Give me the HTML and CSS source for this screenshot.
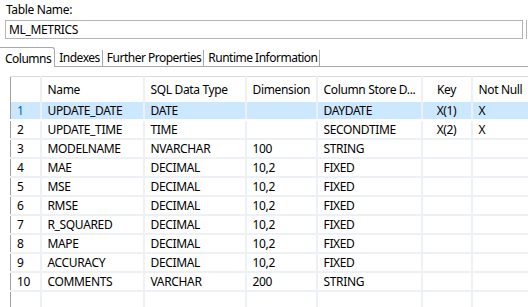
FILE: index.html
```html
<!DOCTYPE html>
<html lang="en">
<head>
    <meta charset="UTF-8">
    <title>Table Editor - ML_METRICS</title>
    <link rel="stylesheet" href="styles.css">
</head>
<body>
    <div class="editor">
        <div class="field-label">Table Name:</div>
        <div class="field-row">
            <div class="field-input">ML_METRICS</div>
            <div class="field-edge"></div>
        </div>
        <div class="tabs">
            <div class="tab active">Columns</div>
            <div class="tab">Indexes</div>
            <div class="tab">Further Properties</div>
            <div class="tab">Runtime Information</div>
            <div class="tab-fill"></div>
        </div>
        <div class="grid-wrap">
            <table class="grid">
                <colgroup>
                    <col class="c-idx">
                    <col class="c-name">
                    <col class="c-type">
                    <col class="c-dim">
                    <col class="c-store">
                    <col class="c-key">
                    <col class="c-null">
                </colgroup>
                <thead>
                    <tr>
                        <th></th>
                        <th>Name</th>
                        <th>SQL Data Type</th>
                        <th>Dimension</th>
                        <th>Column Store D...</th>
                        <th class="center">Key</th>
                        <th>Not Null</th>
                    </tr>
                </thead>
                <tbody>
                    <tr class="selected">
                        <td class="idx">1</td><td>UPDATE_DATE</td><td>DATE</td><td></td><td>DAYDATE</td><td class="center">X(1)</td><td>X</td>
                    </tr>
                    <tr>
                        <td class="idx">2</td><td>UPDATE_TIME</td><td>TIME</td><td></td><td>SECONDTIME</td><td class="center">X(2)</td><td>X</td>
                    </tr>
                    <tr>
                        <td class="idx">3</td><td>MODELNAME</td><td>NVARCHAR</td><td>100</td><td>STRING</td><td></td><td></td>
                    </tr>
                    <tr>
                        <td class="idx">4</td><td>MAE</td><td>DECIMAL</td><td>10,2</td><td>FIXED</td><td></td><td></td>
                    </tr>
                    <tr>
                        <td class="idx">5</td><td>MSE</td><td>DECIMAL</td><td>10,2</td><td>FIXED</td><td></td><td></td>
                    </tr>
                    <tr>
                        <td class="idx">6</td><td>RMSE</td><td>DECIMAL</td><td>10,2</td><td>FIXED</td><td></td><td></td>
                    </tr>
                    <tr>
                        <td class="idx">7</td><td>R_SQUARED</td><td>DECIMAL</td><td>10,2</td><td>FIXED</td><td></td><td></td>
                    </tr>
                    <tr>
                        <td class="idx">8</td><td>MAPE</td><td>DECIMAL</td><td>10,2</td><td>FIXED</td><td></td><td></td>
                    </tr>
                    <tr>
                        <td class="idx">9</td><td>ACCURACY</td><td>DECIMAL</td><td>10,2</td><td>FIXED</td><td></td><td></td>
                    </tr>
                    <tr>
                        <td class="idx">10</td><td>COMMENTS</td><td>VARCHAR</td><td>200</td><td>STRING</td><td></td><td></td>
                    </tr>
                    <tr>
                        <td class="idx"></td><td></td><td></td><td></td><td></td><td></td><td></td>
                    </tr>
                </tbody>
            </table>
        </div>
    </div>
</body>
</html>
```

FILE: styles.css
```css
:root {
    --text-color: #000;
    --border-color: #a9a9a9;
    --grid-line: #edf0f5;
    --select-color: #cce8ff;
    --index-blue: #0063b1;
}
html, body {
    margin: 0;
    background-color: #fff;
    overflow: hidden;
}
body {
    font-family: 'Noto Sans', 'Open Sans', sans-serif;
    font-size: 12px;
    letter-spacing: -0.35px;
    color: var(--text-color);
}
.editor {
    width: 528px;
    height: 307px;
    overflow: hidden;
}
.field-label {
    padding: 2px 0 0 6px;
    height: 18px;
    line-height: 16px;
}
.field-row {
    display: flex;
    gap: 3px;
    padding-left: 5px;
}
.field-input {
    width: 513px;
    height: 17px;
    line-height: 17px;
    border: 1px solid #b4b4b4;
    padding-left: 3px;
}
.field-edge {
    width: 1px;
    height: 19px;
    background-color: #b4b4b4;
}
.tabs {
    display: flex;
    margin-top: 8px;
    height: 20px;
    letter-spacing: -0.5px;
}
.tab {
    height: 16px;
    line-height: 16px;
    margin-top: 3px;
    padding: 0 2px 0 4px;
    border-right: 1px solid var(--border-color);
    border-bottom: 1px solid var(--border-color);
    white-space: nowrap;
}
.tab.active {
    height: 19px;
    margin-top: 0;
    line-height: 22px;
    padding: 0 3px 0 5px;
    border-top: 1px solid var(--border-color);
    border-bottom: none;
    border-top-right-radius: 3px;
}
.tab-fill {
    flex: 1;
    border-bottom: 1px solid var(--border-color);
}
.grid-wrap {
    padding: 9px 0 0 10px;
}
.grid {
    border-collapse: collapse;
    table-layout: fixed;
    width: 540px;
    border-left: 1px solid #a0a0a0;
    border-top: 1px solid #dadada;
}
.c-idx { width: 30px; }
.c-name { width: 103px; }
.c-type { width: 102px; }
.c-dim { width: 71px; }
.c-store { width: 105px; }
.c-key { width: 50px; }
.c-null { width: 79px; }
.grid th,
.grid td {
    padding: 0 0 0 6px;
    text-align: left;
    font-weight: normal;
    white-space: nowrap;
    overflow: hidden;
    border-left: 2px solid var(--grid-line);
}
.grid th {
    height: 25px;
    line-height: 25px;
}
.grid td {
    height: 16px;
    padding-top: 1px;
    line-height: 16px;
    border-bottom: 2px solid var(--grid-line);
}
.grid th:first-child,
.grid td:first-child {
    border-left: none;
}
.grid td.idx {
    padding-left: 6px;
}
.grid .center {
    text-align: center;
    padding-left: 0;
}
.grid tr.selected td {
    background-color: var(--select-color);
    border-bottom-color: #fff;
}
.grid tr.selected td.idx {
    color: var(--index-blue);
}
```
